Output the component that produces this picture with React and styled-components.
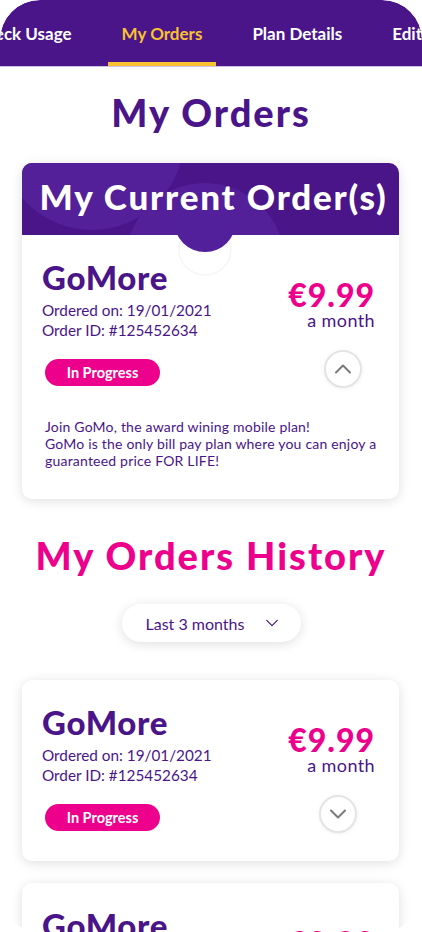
import React from 'react';
import styled, { createGlobalStyle } from 'styled-components';

const PURPLE = '#4a1589';
const PINK = '#ec008c';
const YELLOW = '#f8c230';

const GlobalStyle = createGlobalStyle`
  body {
    margin: 0;
    background: #ffffff;
    font-family: Lato, "Noto Sans", sans-serif;
  }
`;

const Frame = styled.div`
  width: 422px;
  height: 932px;
  overflow: hidden;
  border-radius: 40px;
  background: #ffffff;
`;

const TabBar = styled.nav`
  height: 66px;
  background: ${PURPLE};
  border-radius: 40px 40px 0 0;
  overflow: hidden;
  box-shadow: 0 1px 0 #cfc1e6;
`;

const TabList = styled.ul`
  display: flex;
  gap: 22px;
  height: 100%;
  margin: 0 0 0 -40px;
  padding: 0;
  list-style: none;
  white-space: nowrap;
`;

const Tab = styled.li`
  display: flex;
  align-items: center;
  padding: 4px 14px 0;
  font-size: 17px;
  font-weight: 700;
  color: ${(p) => (p.$active ? YELLOW : '#ffffff')};
  border-bottom: 4px solid ${(p) => (p.$active ? YELLOW : 'transparent')};
`;

const PageTitle = styled.h1`
  margin: 24px 0 29px;
  font-size: 38px;
  line-height: 44px;
  font-weight: 900;
  letter-spacing: 2px;
  text-align: center;
  color: ${(p) => p.$color || PURPLE};
`;

const Card = styled.section`
  margin: 0 23px 0 22px;
  background: #ffffff;
  border-radius: 10px;
  box-shadow: 0 2px 12px rgba(0, 0, 0, 0.13);
  & + & {
    margin-top: 22px;
  }
`;

const CardHeader = styled.header`
  position: relative;
  height: 72px;
  display: flex;
  align-items: center;
  justify-content: center;
  background: ${PURPLE};
  border-radius: 10px 10px 0 0;
`;

const HeaderDecor = styled.svg`
  position: absolute;
  left: 0;
  top: 0;
  overflow: visible;
`;

const HeaderTitle = styled.h2`
  position: relative;
  margin: 0 0 6px 6px;
  font-size: 35px;
  font-weight: 900;
  letter-spacing: 1.8px;
  color: #ffffff;
`;

const CardBody = styled.div`
  padding: 22px 24px ${(p) => (p.$compact ? '28px' : '30px')} 20px;
`;

const TopRow = styled.div`
  display: flex;
  justify-content: space-between;
`;

const PlanName = styled.div`
  font-size: 33px;
  line-height: 40px;
  font-weight: 900;
  letter-spacing: 0.7px;
  color: ${PURPLE};
  margin-bottom: 3px;
`;

const Meta = styled.div`
  font-size: 15.3px;
  line-height: 20px;
  color: ${PURPLE};
`;

const PriceBlock = styled.div`
  padding-top: 23px;
  text-align: right;
`;

const Price = styled.div`
  font-size: 32px;
  line-height: 30px;
  font-weight: 900;
  letter-spacing: 1px;
  color: ${PINK};
`;

const PricePeriod = styled.div`
  font-size: 18px;
  line-height: 20px;
  letter-spacing: 0.4px;
  color: ${PURPLE};
`;

const ActionRow = styled.div`
  display: flex;
  justify-content: space-between;
  align-items: center;
  margin-top: 16px;
`;

const Badge = styled.span`
  display: inline-flex;
  align-items: center;
  justify-content: center;
  width: 115px;
  height: 27px;
  margin-left: 3px;
  border-radius: 14px;
  background: ${PINK};
  color: #ffffff;
  font-size: 14.5px;
  font-weight: 700;
`;

const ToggleButton = styled.button`
  width: 38px;
  height: 38px;
  margin: -6px ${(p) => p.$offset}px 0 0;
  padding: 0;
  display: flex;
  align-items: center;
  justify-content: center;
  border: 2px solid #e4e4e4;
  border-radius: 50%;
  background: #ffffff;
  box-shadow: 0 1px 4px rgba(0, 0, 0, 0.06);
  color: #7a7a7a;
`;

const Description = styled.p`
  margin: 30px -12px 0 3px;
  font-size: 14px;
  line-height: 17px;
  letter-spacing: 0.2px;
  color: ${PURPLE};
`;

const HistoryTitle = styled(PageTitle)`
  margin: 34px 0 27px;
`;

const FilterWrap = styled.div`
  display: flex;
  justify-content: center;
  margin-bottom: 38px;
`;

const Filter = styled.button`
  display: flex;
  align-items: center;
  gap: 22px;
  width: 179px;
  height: 38px;
  padding: 0 20px 0 24px;
  border: none;
  border-radius: 19px;
  background: #ffffff;
  box-shadow: 0 2px 12px rgba(0, 0, 0, 0.13);
  font-family: inherit;
  font-size: 16px;
  color: ${PURPLE};
  white-space: nowrap;
`;

const Chevron = ({ up, size = 16, color = 'currentColor', width = 2 }) => (
  <svg width={size} height={size / 2 + 2} viewBox="0 0 16 10" fill="none">
    <polyline
      points={up ? '1,8.5 8,1.5 15,8.5' : '1,1.5 8,8.5 15,1.5'}
      stroke={color}
      strokeWidth={width}
      strokeLinecap="round"
      strokeLinejoin="round"
    />
  </svg>
);

const OrderSummary = ({ expanded, offset }) => (
  <>
    <TopRow>
      <div>
        <PlanName>GoMore</PlanName>
        <Meta>Ordered on: 19/01/2021</Meta>
        <Meta>Order ID: #125452634</Meta>
      </div>
      <PriceBlock>
        <Price>€9.99</Price>
        <PricePeriod>a month</PricePeriod>
      </PriceBlock>
    </TopRow>
    <ActionRow>
      <Badge>In Progress</Badge>
      <ToggleButton $offset={offset} aria-label={expanded ? 'Collapse' : 'Expand'}>
        <Chevron up={expanded} />
      </ToggleButton>
    </ActionRow>
  </>
);

const App = () => {
  return (
    <Frame>
      <GlobalStyle />
      <TabBar>
        <TabList>
          <Tab>Check Usage</Tab>
          <Tab $active>My Orders</Tab>
          <Tab>Plan Details</Tab>
          <Tab>Edit profile</Tab>
        </TabList>
      </TabBar>

      <PageTitle>My Orders</PageTitle>

      <Card>
        <CardHeader>
          <HeaderDecor width="377" height="90">
            <defs>
              <clipPath id="band">
                <rect x="0" y="0" width="377" height="72" rx="10" />
              </clipPath>
            </defs>
            <g clipPath="url(#band)" fill="#53209a">
              <circle cx="70" cy="-25" r="92" />
              <circle cx="183" cy="100" r="80" />
            </g>
            <circle cx="183" cy="86" r="26" fill="none" stroke="#f6f6f6" strokeWidth="1.5" />
            <circle cx="183" cy="58" r="31" fill="#52209a" />
          </HeaderDecor>
          <HeaderTitle>My Current Order(s)</HeaderTitle>
        </CardHeader>
        <CardBody>
          <OrderSummary expanded offset={13} />
          <Description>
            Join GoMo, the award wining mobile plan!
            <br />
            GoMo is the only bill pay plan where you can enjoy a
            <br />
            guaranteed price FOR LIFE!
          </Description>
        </CardBody>
      </Card>

      <HistoryTitle $color={PINK}>My Orders History</HistoryTitle>

      <FilterWrap>
        <Filter>
          Last 3 months
          <Chevron size={12} width={1.6} />
        </Filter>
      </FilterWrap>

      <Card>
        <CardBody $compact>
          <OrderSummary offset={18} />
        </CardBody>
      </Card>
      <Card>
        <CardBody $compact>
          <OrderSummary offset={18} />
        </CardBody>
      </Card>
    </Frame>
  );
};

export default App;
